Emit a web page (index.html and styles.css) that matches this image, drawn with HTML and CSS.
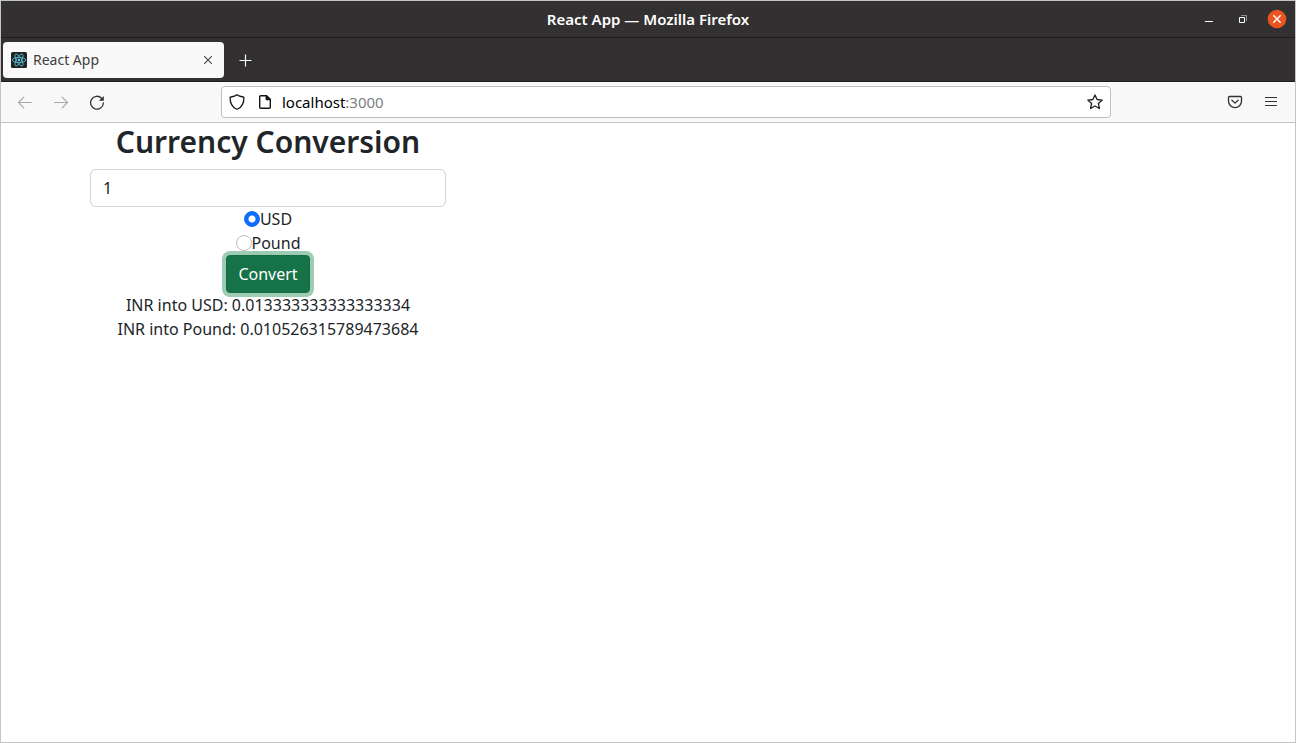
FILE: index.html
```html
<!DOCTYPE html>
<html lang="en">
<head>
<meta charset="utf-8">
<meta name="viewport" content="width=device-width, initial-scale=1">
<title>React App</title>
<link rel="stylesheet" href="styles.css">
</head>
<body>
<div class="window">
  <header class="titlebar">
    <div class="window-title">React App — Mozilla Firefox</div>
    <div class="window-controls">
      <button class="window-button" aria-label="Minimize"><svg width="16" height="16" viewBox="0 0 16 16"><path d="M4 10.500h8" stroke="#fff"/></svg></button>
      <button class="window-button" aria-label="Restore"><svg width="16" height="16" viewBox="0 0 16 16" fill="none"><path d="M4.500 6.500h5v5h-5z" stroke="#fff"/><path d="M6 4.500h5.500V10" stroke="#8f8e8e"/></svg></button>
      <button class="window-button" aria-label="Close"><svg width="20" height="20" viewBox="0 0 20 20"><circle cx="10" cy="10" r="9.300" fill="#e95420"/><path d="M6.300 6.300l7.400 7.400M13.700 6.300l-7.400 7.400" stroke="#fff" stroke-width="1.400"/></svg></button>
    </div>
  </header>

  <div class="tabstrip">
    <div class="tab">
      <svg width="16" height="16" viewBox="0 0 16 16" fill="none" stroke="#61dafb" stroke-width=".7"><rect width="16" height="16" rx="1.500" fill="#222" stroke="none"/><ellipse cx="8" cy="8" rx="6.700" ry="2.600"/><ellipse cx="8" cy="8" rx="6.700" ry="2.600" transform="rotate(60 8 8)"/><ellipse cx="8" cy="8" rx="6.700" ry="2.600" transform="rotate(120 8 8)"/><circle cx="8" cy="8" r="1.200" fill="#61dafb" stroke="none"/></svg>
      <span class="tab-title">React App</span>
      <button class="tab-close" aria-label="Close tab"><svg width="16" height="16" viewBox="0 0 16 16"><path d="M4.200 4.200l7.600 7.600M11.800 4.200l-7.600 7.600" stroke="#444" stroke-width="1.100"/></svg></button>
    </div>
    <button class="new-tab" aria-label="New tab"><svg width="16" height="16" viewBox="0 0 16 16"><path d="M8.500 2.500v12M2.500 8.500h12" stroke="#fff" stroke-width="1.200"/></svg></button>
  </div>

  <nav class="toolbar">
    <button class="tool" aria-label="Back"><svg width="16" height="16" viewBox="0 0 16 16" fill="none" stroke="#aaa" stroke-width="1.200" stroke-linecap="round" stroke-linejoin="round"><path d="M14.500 8.500H1.500M6.800 3.200L1.500 8.500l5.300 5.300"/></svg></button>
    <button class="tool" aria-label="Forward"><svg width="16" height="16" viewBox="0 0 16 16" fill="none" stroke="#aaa" stroke-width="1.200" stroke-linecap="round" stroke-linejoin="round"><path d="M1.500 8.500h13M9.200 3.200l5.300 5.300-5.300 5.300"/></svg></button>
    <button class="tool" aria-label="Reload"><svg width="16" height="16" viewBox="0 0 16 16" fill="none" stroke="#333" stroke-width="1.300" stroke-linecap="round"><path d="M12.600 4.200A6.400 6.400 0 1 0 14.400 9"/><path d="M14.800 2v4.800H10z" fill="#333" stroke="none"/></svg></button>
    <div class="spring"></div>
    <div class="urlbar">
      <div class="identity">
        <svg width="16" height="16" viewBox="0 0 16 16" fill="none" stroke="#15141a" stroke-width="1.300" stroke-linejoin="round"><path d="M8 .7C9.500 2 12 2.700 14.200 3c.4 0 .7.300.7.700 0 5.200-2 9.400-6.300 11.300-.4.200-.8.200-1.200 0C3.100 13.100 1.100 8.900 1.100 3.700c0-.4.300-.7.700-.7C4 2.700 6.500 2 8 .700z"/></svg>
        <svg width="16" height="16" viewBox="0 0 16 16" fill="none" stroke="#15141a" stroke-width="1.400" stroke-linejoin="round"><path d="M3.700 1.700h5.800l3.800 3.800v7.800q0 1-1 1H3.700q-1 0-1-1V2.700q0-1 1-1z"/><path d="M9.300 1.700v3.800h4z" fill="#15141a"/></svg>
      </div>
      <div class="address">localhost<span class="port">:3000</span></div>
      <button class="bookmark" aria-label="Bookmark this page"><svg width="16" height="16" viewBox="0 0 16 16" fill="none" stroke="#222" stroke-width="1.300" stroke-linejoin="round"><path d="M8 .9l2.100 4.600 5.100.6-3.800 3.400 1 5-4.400-2.500-4.400 2.500 1-5L.8 6.100l5.100-.6z"/></svg></button>
    </div>
    <div class="spring"></div>
    <button class="tool" aria-label="Save to Pocket"><svg width="16" height="16" viewBox="0 0 16 16" fill="none" stroke="#333" stroke-width="1.300" stroke-linecap="round" stroke-linejoin="round"><path d="M2.500 2.500h11q1 0 1 1v3.600a6.500 6.500 0 0 1-13 0V3.500q0-1 1-1z"/><path d="M4.900 6.200L8 9.100l3.100-2.900"/></svg></button>
    <button class="tool" aria-label="Open menu"><svg width="16" height="16" viewBox="0 0 16 16"><path d="M2 3.500h12M2 7.500h12M2 11.500h12" stroke="#333" stroke-width="1.200"/></svg></button>
  </nav>

  <main class="page">
    <div class="container">
      <form class="converter">
        <h1>Currency Conversion</h1>
        <input class="amount" type="text" value="1" aria-label="Amount in INR">
        <label class="choice"><input type="radio" name="currency" checked>USD</label>
        <label class="choice"><input type="radio" name="currency">Pound</label>
        <button class="convert" type="button">Convert</button>
        <p>INR into USD: 0.013333333333333334</p>
        <p>INR into Pound: 0.010526315789473684</p>
      </form>
    </div>
  </main>
</div>
</body>
</html>
```
FILE: styles.css
```css
*, *::before, *::after { box-sizing: border-box; }

body {
  margin: 0;
  font-family: "Noto Sans", "Open Sans", sans-serif;
  font-size: 16px;
  line-height: 24px;
  color: #212529;
  background: #fff;
}

svg { display: block; flex: none; }

button {
  padding: 0;
  border: 0;
  background: none;
  font: inherit;
}

.window {
  min-height: 100vh;
  display: flex;
  flex-direction: column;
  border: 1px solid #c4c4c4;
}

.titlebar {
  height: 37px;
  display: grid;
  grid-template-columns: 1fr auto 1fr;
  align-items: center;
  background: #323030;
  border-bottom: 1px solid #1e1c1c;
}

.window-title {
  grid-column: 2;
  font-size: 15px;
  font-weight: 600;
  color: #fff;
}

.window-controls {
  display: flex;
  justify-content: flex-end;
  padding-right: 1px;
}

.window-button {
  width: 34px;
  height: 34px;
  display: grid;
  place-items: center;
}

.tabstrip {
  height: 44px;
  display: flex;
  align-items: center;
  gap: 3px;
  padding: 0 2px;
  background: #323030;
  border-bottom: 1px solid #1e1c1c;
}

.tab {
  width: 221px;
  height: 36px;
  display: flex;
  align-items: center;
  gap: 6px;
  padding: 0 8px;
  border-radius: 4px;
  background: #f9f9f9;
  color: #3d3d3d;
}

.tab-title { flex: 1; font-size: 14px; }

.new-tab {
  width: 36px;
  height: 36px;
  display: grid;
  place-items: center;
}

.toolbar {
  height: 41px;
  display: flex;
  align-items: center;
  padding: 0 6px;
  background: #f8f8f8;
  border-bottom: 1px solid #c4c4c4;
}

.tool {
  width: 36px;
  height: 36px;
  flex: none;
  display: grid;
  place-items: center;
}

.spring { flex: 4 1 0; }

.urlbar {
  flex: 33 1 0;
  height: 32px;
  display: flex;
  align-items: center;
  gap: 9px;
  padding: 0 7px;
  border: 1px solid #bfbfbf;
  border-radius: 4px;
  background: #fff;
}

.identity { display: flex; gap: 12px; }

.address {
  flex: 1;
  font-size: 15px;
  color: #000;
}

.port { color: #808080; }

.container {
  max-width: 1140px;
  margin: 0 auto;
  padding: 0 12px;
}

.converter {
  width: calc((100% + 24px) / 3 - 24px);
  min-width: 320px;
  display: flex;
  flex-direction: column;
  align-items: center;
}

h1 {
  margin: 0 0 8px;
  font-size: 30px;
  line-height: 38px;
  font-weight: 600;
}

.amount {
  width: 100%;
  height: 38px;
  padding: 6px 12px;
  border: 1px solid #ced4da;
  border-radius: 6px;
  background: #fff;
  font: inherit;
  color: inherit;
}

.choice { display: flex; align-items: center; }

.choice input {
  appearance: none;
  width: 16px;
  height: 16px;
  margin: 0;
  border: 1px solid #bfbfbf;
  border-radius: 50%;
  background: #fff;
}

.choice input:checked {
  border-color: #0d6efd;
  background: radial-gradient(circle, #fff 3px, #0d6efd 4px);
}

.convert {
  height: 38px;
  padding: 0 11px;
  border: 1px solid #146c43;
  border-radius: 4px;
  background: #157347;
  color: #fff;
  box-shadow: 0 0 0 4px #9dccb5;
}

p { margin: 0; }
```
